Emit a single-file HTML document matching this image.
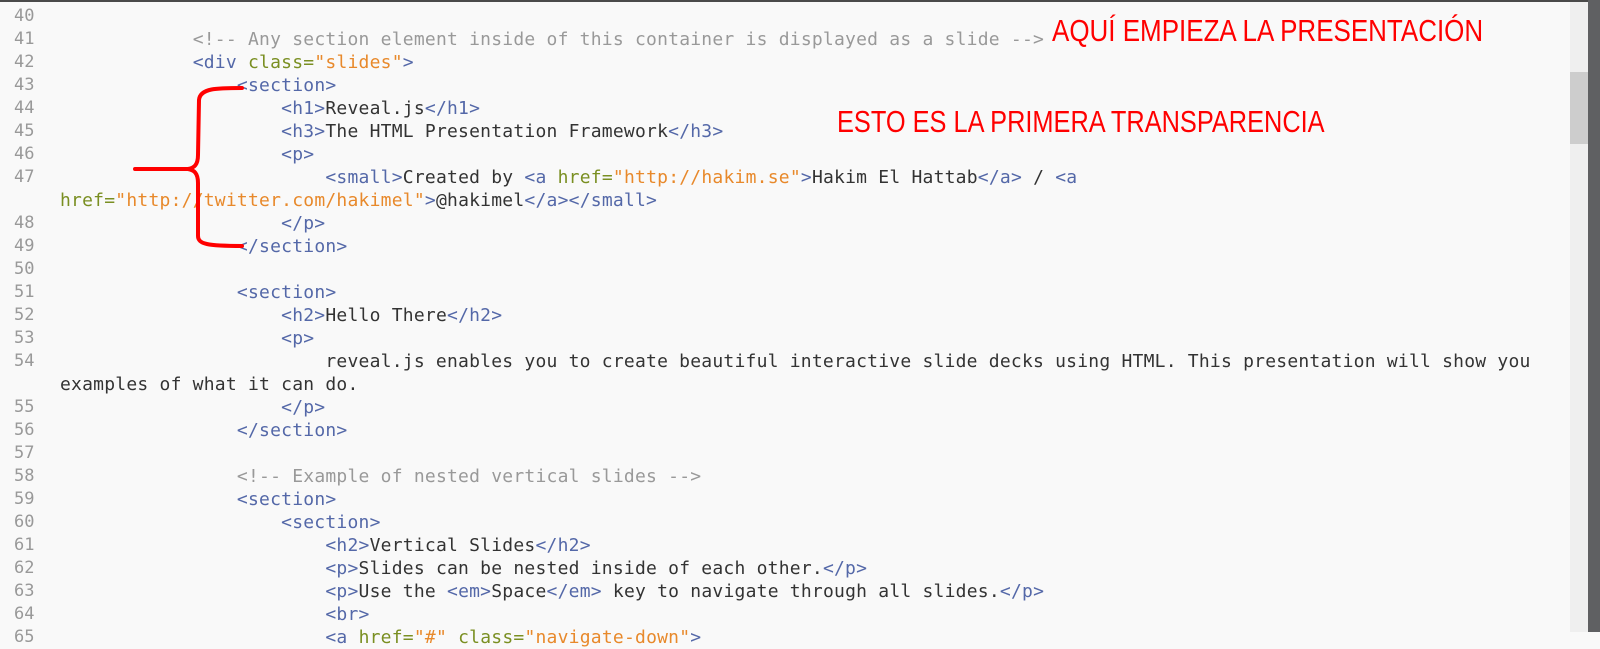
<!DOCTYPE html>
<html><head><meta charset="utf-8"><style>
html,body{margin:0;padding:0;}
body{width:1600px;height:632px;overflow:hidden;background:#f9f9f9;position:relative;font-family:"DejaVu Sans Mono","Liberation Mono",monospace;}
.top{position:absolute;left:0;top:0;width:1600px;height:2px;background:#4a4a4a;}
.ln{position:absolute;left:14px;top:5px;font-size:17px;color:#999;line-height:23px;}
.code{position:absolute;left:60px;top:5px;font-size:18px;line-height:23px;color:#333;white-space:pre;letter-spacing:0.22px;}
.t{color:#5468a8}.a{color:#7a8f22}.s{color:#e8892b}.c{color:#999}
.track{position:absolute;left:1570px;top:2px;width:18px;height:630px;background:#efefef;}
.thumb{position:absolute;left:1570px;top:72px;width:18px;height:72px;background:#cdcdcd;}
.dark{position:absolute;left:1588px;top:0;width:12px;height:632px;background:#5f6062;}
.red{position:absolute;color:#f00;font-family:"Liberation Sans",sans-serif;font-size:31px;white-space:nowrap;transform-origin:0 0;line-height:1;}
</style></head><body>
<div class="top"></div>
<div class="ln">40<br>41<br>42<br>43<br>44<br>45<br>46<br>47<br><br>48<br>49<br>50<br>51<br>52<br>53<br>54<br><br>55<br>56<br>57<br>58<br>59<br>60<br>61<br>62<br>63<br>64<br>65</div>
<div class="code">
            <span class="c">&lt;!-- Any section element inside of this container is displayed as a slide --&gt;</span>
            <span class="t">&lt;div</span> <span class="a">class=</span><span class="s">"slides"</span><span class="t">&gt;</span>
                <span class="t">&lt;section&gt;</span>
                    <span class="t">&lt;h1&gt;</span>Reveal.js<span class="t">&lt;/h1&gt;</span>
                    <span class="t">&lt;h3&gt;</span>The HTML Presentation Framework<span class="t">&lt;/h3&gt;</span>
                    <span class="t">&lt;p&gt;</span>
                        <span class="t">&lt;small&gt;</span>Created by <span class="t">&lt;a</span> <span class="a">href=</span><span class="s">"http://hakim.se"</span><span class="t">&gt;</span>Hakim El Hattab<span class="t">&lt;/a&gt;</span> / <span class="t">&lt;a</span>
<span class="a">href=</span><span class="s">"http://twitter.com/hakimel"</span><span class="t">&gt;</span>@hakimel<span class="t">&lt;/a&gt;&lt;/small&gt;</span>
                    <span class="t">&lt;/p&gt;</span>
                <span class="t">&lt;/section&gt;</span>

                <span class="t">&lt;section&gt;</span>
                    <span class="t">&lt;h2&gt;</span>Hello There<span class="t">&lt;/h2&gt;</span>
                    <span class="t">&lt;p&gt;</span>
                        reveal.js enables you to create beautiful interactive slide decks using HTML. This presentation will show you
examples of what it can do.
                    <span class="t">&lt;/p&gt;</span>
                <span class="t">&lt;/section&gt;</span>

                <span class="c">&lt;!-- Example of nested vertical slides --&gt;</span>
                <span class="t">&lt;section&gt;</span>
                    <span class="t">&lt;section&gt;</span>
                        <span class="t">&lt;h2&gt;</span>Vertical Slides<span class="t">&lt;/h2&gt;</span>
                        <span class="t">&lt;p&gt;</span>Slides can be nested inside of each other.<span class="t">&lt;/p&gt;</span>
                        <span class="t">&lt;p&gt;</span>Use the <span class="t">&lt;em&gt;</span>Space<span class="t">&lt;/em&gt;</span> key to navigate through all slides.<span class="t">&lt;/p&gt;</span>
                        <span class="t">&lt;br&gt;</span>
                        <span class="t">&lt;a</span> <span class="a">href=</span><span class="s">"#"</span> <span class="a">class=</span><span class="s">"navigate-down"</span><span class="t">&gt;</span></div>
<svg style="position:absolute;left:0;top:0" width="1600" height="632">
<path d="M242 88 C217 88 200 88 199 100 L198 155 C198 165 194 168 188 169 L135 169 M188 169 C194 170 198 173 198 183 L198 236 C198 244 207 246 242 246" fill="none" stroke="#f00" stroke-width="4" stroke-linecap="round"/>
</svg>
<div class="red" style="left:1052px;top:15px;transform:scaleX(0.838)">AQUÍ EMPIEZA LA PRESENTACIÓN</div>
<div class="red" style="left:837px;top:106px;transform:scaleX(0.818)">ESTO ES LA PRIMERA TRANSPARENCIA</div>
<div class="track"></div><div class="thumb"></div><div class="dark"></div>
</body></html>
